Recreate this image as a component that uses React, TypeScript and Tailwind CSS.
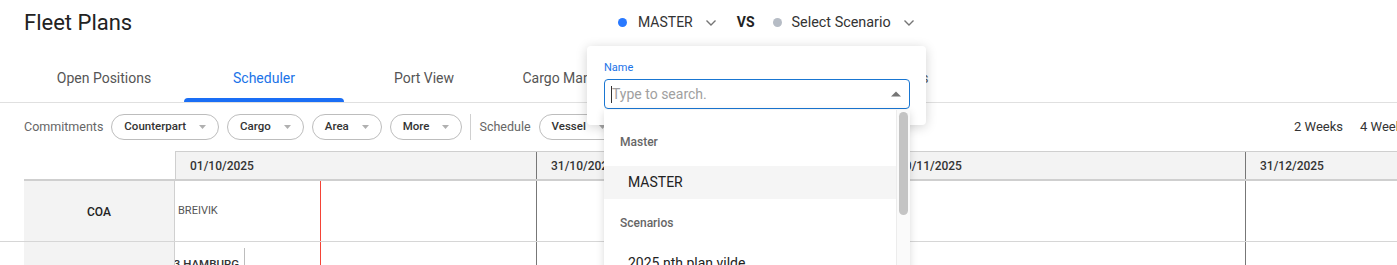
import React from "react";

const Caret = () => (
  <svg width="7" height="4" viewBox="0 0 7 4" className="ml-[13px]">
    <path d="M0 0 L7 0 L3.5 4 Z" fill="#b0b0b0" />
  </svg>
);

const Chevron = () => (
  <svg width="12" height="8" viewBox="0 0 12 8">
    <path d="M1.5 1.5 L6 6 L10.5 1.5" fill="none" stroke="#757575" strokeWidth="1.4" />
  </svg>
);

function Chip({ label }: { label: string }) {
  return (
    <div className="h-[26px] flex items-center rounded-full border border-[#bdbdbd] pl-[12px] pr-[12px] text-[11.5px] font-medium text-[#333]">
      <span>{label}</span>
      <Caret />
    </div>
  );
}

const tabs = ["Open Positions", "Scheduler", "Port View", "Cargo Management", "Voyages", "Reports"];

export default function App() {
  return (
    <div
      className="relative w-[1397px] h-[265px] overflow-hidden bg-white"
      style={{ fontFamily: "Roboto, 'Liberation Sans', sans-serif" }}
    >
      {/* Header */}
      <div className="h-[46px] flex items-center pl-[24px]">
        <div className="w-[594px] text-[22px] text-[#222] leading-none">Fleet Plans</div>
        <div className="flex items-center text-[14px] text-[#333]">
          <span className="w-[9px] h-[9px] rounded-full bg-[#2979ff]" />
          <span className="ml-[11px]">MASTER</span>
          <span className="ml-[12px]"><Chevron /></span>
          <span className="ml-[20px] font-bold text-[#222]">VS</span>
          <span className="ml-[18px] w-[9px] h-[9px] rounded-full bg-[#b6bcc5]" />
          <span className="ml-[10px] text-[14.4px]">Select Scenario</span>
          <span className="ml-[12px]"><Chevron /></span>
        </div>
      </div>

      {/* Tabs */}
      <div className="h-[57px] flex pl-[24px] border-b border-[#e0e0e0]">
        {tabs.map((t) => (
          <div
            key={t}
            className={
              "relative w-[160px] h-full flex items-center justify-center pt-[8px] text-[14px] " +
              (t === "Scheduler" ? "text-[#1a73e8]" : "text-[#555]")
            }
          >
            {t}
            {t === "Scheduler" && (
              <div className="absolute left-0 right-0 bottom-0 h-[4px] rounded-t-[4px] bg-[#1a6ef5]" />
            )}
          </div>
        ))}
      </div>

      {/* Filter row */}
      <div className="h-[48px] flex items-center pl-[24px]">
        <span className="text-[12.5px] text-[#666] mr-[8px]">Commitments</span>
        <div className="flex gap-[8px]">
          <Chip label="Counterpart" />
          <Chip label="Cargo" />
          <Chip label="Area" />
          <Chip label="More" />
        </div>
        <div className="mx-[8px] w-px h-[26px] bg-[#d0d0d0]" />
        <span className="text-[12.5px] text-[#666] mr-[8px]">Schedule</span>
        <Chip label="Vessel" />
        <div className="ml-auto flex items-center text-[13px] text-[#333] gap-[17px] mr-[-12px]">
          <span>2 Weeks</span>
          <span>4 Weeks</span>
        </div>
      </div>

      {/* Grid header */}
      <div className="flex pl-[24px]">
        <div className="w-[151px] h-[30px] border-b-2 border-[#cfcfcf]" />
        <div className="flex-1 flex h-[30px] bg-[#f3f3f3] border-t border-b-2 border-[#cfcfcf] text-[12px] font-medium text-[#333]">
          <div className="w-[361px] flex items-center pl-[14px] border-l border-[#cfcfcf]">01/10/2025</div>
          <div className="w-[347px] flex items-center pl-[14px] border-l border-[#777]">31/10/2025</div>
          <div className="w-[362px] flex items-center pl-[14px] border-l border-[#cfcfcf]">30/11/2025</div>
          <div className="flex-1 flex items-center pl-[14px] border-l border-[#777]">31/12/2025</div>
        </div>
      </div>

      {/* Row COA */}
      <div className="flex pl-[24px] h-[61px] border-b border-[#d6d6d6]">
        <div className="w-[151px] bg-[#f3f3f3] border-r border-[#d0d0d0] flex items-center justify-center pt-[1px] text-[12px] font-medium text-[#222]">
          COA
        </div>
        <div className="relative flex-1 flex">
          <div className="w-[361px] flex items-center pl-[3px] text-[11px] text-[#555]">BREIVIK</div>
          <div className="w-[347px] border-l border-[#777]" />
          <div className="w-[362px] border-l border-[#e0e0e0]" />
          <div className="flex-1 border-l border-[#777]" />
          <div className="absolute left-[145px] top-0 bottom-0 w-px bg-[#f44336]" />
        </div>
      </div>

      {/* Row 2 */}
      <div className="flex pl-[24px] h-[30px]">
        <div className="w-[151px] bg-[#f3f3f3] border-r border-[#d0d0d0]" />
        <div className="relative flex-1 flex overflow-hidden">
          <div className="w-[361px] relative">
            <div className="absolute left-[-40px] top-[6px] w-[110px] h-[40px] border-r border-[#bdbdbd] pt-[8px] pr-[5px] flex justify-end text-[11.5px] font-medium text-[#333] whitespace-nowrap">
              R3 HAMBURG
            </div>
          </div>
          <div className="w-[347px] border-l border-[#777]" />
          <div className="w-[362px] border-l border-[#e0e0e0]" />
          <div className="flex-1 border-l border-[#777]" />
          <div className="absolute left-[145px] top-0 bottom-0 w-px bg-[#f44336]" />
        </div>
      </div>

      {/* Dropdown card */}
      <div className="absolute left-[587px] top-[46px] w-[339px] h-[79px] bg-white rounded-[4px] shadow-[0_2px_12px_rgba(0,0,0,0.18)] pl-[17px] pt-[15px]">
        <div className="text-[11px] leading-[14px] text-[#1a73e8]">Name</div>
        <div className="mt-[4px] w-[306px] h-[30px] rounded-[4px] border border-[#1976d2] flex items-center pl-[6px] pr-[8px]">
          <span className="w-px h-[17px] bg-[#333]" />
          <span className="text-[14px] text-[#a0a0a0] flex-1">Type to search.</span>
          <svg width="10" height="6" viewBox="0 0 10 6">
            <path d="M0 5.5 L10 5.5 L5 0.5 Z" fill="#757575" />
          </svg>
        </div>
      </div>

      {/* Listbox */}
      <div className="absolute left-[604px] top-[110px] w-[306px] h-[170px] bg-white shadow-[0_2px_8px_rgba(0,0,0,0.15)] flex">
        <div className="flex-1 flex flex-col">
          <div className="h-[56px] flex items-center pl-[16px] pt-[8px] text-[12px] font-medium text-[#666]">Master</div>
          <div className="h-[33px] flex items-center pl-[24px] bg-[#f5f5f5] text-[14px] text-[#222]">MASTER</div>
          <div className="h-[47px] flex items-center pl-[16px] text-[12px] font-medium text-[#666]">Scenarios</div>
          <div className="h-[33px] pl-[24px] pt-[8px] text-[14px] leading-[18px] text-[#222] whitespace-nowrap">2025 nth plan vilde</div>
        </div>
        <div className="w-[14px] bg-[#fafafa] border-l border-[#ececec] pt-[2px] pl-[2px]">
          <div className="w-[9px] h-[103px] rounded-full bg-[#c4c4c4]" />
        </div>
      </div>
    </div>
  );
}
